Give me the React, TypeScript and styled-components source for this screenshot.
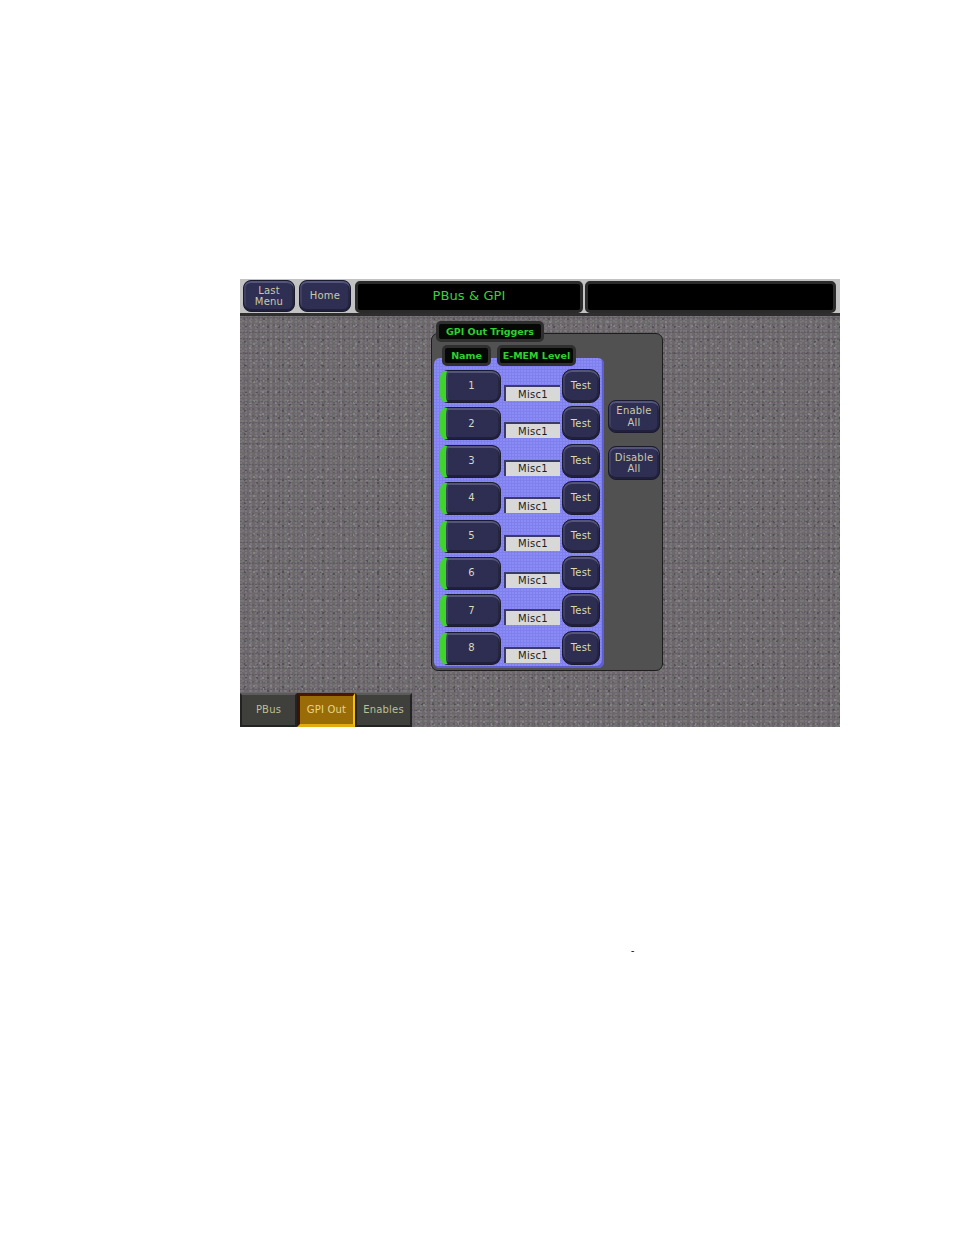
import React from "react";
import styled, { createGlobalStyle, css } from "styled-components";

const GlobalStyle = createGlobalStyle`
  html, body {
    margin: 0;
    padding: 0;
    background: #fff;
  }
`;

const speckle = css`
  background-color: #6c686b;
  background-image:
    radial-gradient(circle at 1px 1px, #8b8290 0.6px, transparent 0.8px),
    radial-gradient(circle at 3px 2px, #7f8a78 0.6px, transparent 0.8px),
    radial-gradient(circle at 1px 4px, #5c585e 0.65px, transparent 0.85px),
    radial-gradient(circle at 6px 9px, #484548 0.65px, transparent 0.85px),
    radial-gradient(circle at 10px 3px, #948a98 0.65px, transparent 0.85px),
    radial-gradient(circle at 14px 8px, #9aa396 0.6px, transparent 0.8px),
    radial-gradient(circle at 5px 17px, #4a474a 0.65px, transparent 0.85px),
    radial-gradient(circle at 20px 12px, #a39aa6 0.6px, transparent 0.8px);
  background-size:
    5px 3px, 7px 5px, 3px 7px, 11px 13px,
    13px 11px, 17px 19px, 19px 23px, 29px 31px;
`;

const Page = styled.div`
  width: 954px;
  height: 1235px;
  padding: 279px 0 0 240px;
  box-sizing: border-box;
  overflow: hidden;
  font-family: "DejaVu Sans", Verdana, sans-serif;
`;

const Window = styled.div`
  ${speckle}
  width: 600px;
  height: 448px;
  display: flex;
  flex-direction: column;
`;

const Header = styled.div`
  height: 37px;
  box-sizing: border-box;
  padding: 1px 3px 0 3px;
  display: flex;
  gap: 4px;
  background-color: #a4a4a4;
  background-image:
    radial-gradient(circle at 1px 1px, #c4c4c4 0.7px, transparent 0.85px);
  background-size: 2px 2px;
  border-bottom: 3px solid #2e2e2e;
`;

const BevelButton = styled.div<{ $w: number; $h: number }>`
  width: ${(p) => p.$w}px;
  height: ${(p) => p.$h}px;
  box-sizing: border-box;
  flex: none;
  display: flex;
  align-items: center;
  justify-content: center;
  text-align: center;
  font-size: 10px;
  line-height: 11.5px;
  letter-spacing: 0.2px;
  color: #c9c9aa;
  background-color: #383862;
  background-image:
    radial-gradient(circle at 1px 1px, #2e2e52 0.7px, transparent 0.85px);
  background-size: 2px 2px;
  border: 1px solid #1a1a30;
  border-radius: 8px;
  box-shadow:
    inset 0 2px 0 #55557a,
    inset 0 -2px 0 #20203a,
    inset 2px 0 0 #3f3f66,
    inset -2px 0 0 #25253f;
`;

const Display = styled.div<{ $w: number }>`
  width: ${(p) => p.$w}px;
  height: 32px;
  margin-top: 1px;
  box-sizing: border-box;
  flex: none;
  display: flex;
  align-items: center;
  justify-content: center;
  padding-bottom: 3px;
  font-size: 13px;
  letter-spacing: 0.1px;
  color: #35d335;
  background: #000;
  border: 3px solid #2b2b2b;
  border-radius: 5px;
`;

const BlankDisplay = styled(Display)`
  margin-left: -2px;
`;

const Content = styled.div`
  flex: 1;
  padding: 5px 0 0 191px;
`;

const GreenTag = styled.div<{ $w: number }>`
  position: relative;
  z-index: 2;
  width: ${(p) => p.$w}px;
  height: 21px;
  box-sizing: border-box;
  display: flex;
  align-items: center;
  justify-content: center;
  font-size: 9.5px;
  font-weight: bold;
  white-space: nowrap;
  color: #2fd02f;
  background: #050805;
  border: 3px solid #2f2f2f;
  border-radius: 5px;
`;

const TitleTag = styled(GreenTag)`
  margin-left: 5px;
`;

const Panel = styled.div`
  width: 232px;
  height: 338px;
  box-sizing: border-box;
  margin-top: -9px;
  padding-top: 11px;
  background-color: #474747;
  background-image:
    radial-gradient(circle at 1px 1px, #525252 0.7px, transparent 0.85px);
  background-size: 2px 2px;
  border: 1px solid #1d1d1d;
  border-radius: 7px;
`;

const ColumnHeads = styled.div`
  display: flex;
  gap: 6px;
  margin-left: 10px;
`;

const PanelBody = styled.div`
  display: flex;
  margin: -8px 0 0 2px;
`;

const BluePanel = styled.div`
  width: 170px;
  height: 310px;
  box-sizing: border-box;
  padding: 11px 4px 0 6px;
  background-color: #7f7fee;
  background-image:
    radial-gradient(circle at 1px 1px, #8c8cf6 0.7px, transparent 0.85px);
  background-size: 3px 3px;
  border-radius: 6px;
  box-shadow: inset -2px -2px 0 #5e5ed0;
`;

const Row = styled.div`
  height: 37.4px;
  display: flex;
  align-items: flex-start;
`;

const NumberButton = styled(BevelButton)`
  background-color: #2c2c48;
  border-left: 6px solid #3fd42c;
  border-radius: 8px 9px 9px 8px;
  margin-top: 1px;
  padding: 0 3px 1px 0;
  color: #d8d8c0;
`;

const TestButton = styled(BevelButton)`
  background-color: #30305a;
  border-radius: 10px;
  color: #dcdca8;
  margin-left: 2px;
`;

const Field = styled.div`
  width: 56px;
  height: 16px;
  box-sizing: border-box;
  margin: 16px 0 0 3px;
  flex: none;
  display: flex;
  align-items: center;
  justify-content: center;
  font-size: 10px;
  letter-spacing: 0.3px;
  color: #1c1c1c;
  background: #d8d8d8;
  border-top: 2px solid #3b3b66;
  border-left: 2px solid #3b3b66;
`;

const SideColumn = styled.div`
  display: flex;
  flex-direction: column;
  gap: 13px;
  padding: 42px 0 0 4px;
`;

const Tabs = styled.div`
  display: flex;
`;

const Tab = styled.div<{ $w: number; $active?: boolean }>`
  width: ${(p) => p.$w}px;
  height: 34px;
  box-sizing: border-box;
  flex: none;
  display: flex;
  align-items: center;
  justify-content: center;
  padding-bottom: 1px;
  font-size: 10px;
  letter-spacing: 0.2px;
  color: #bfbf90;
  background: #3f403c;
  border: 2px solid #232323;
  border-top: 2px solid #5b5b5b;
  ${(p) =>
    p.$active &&
    css`
      color: #e6d68a;
      background: #9a6c08;
      border-color: #4a1800 #f2c010 #e2ac10 #3a1400;
      border-width: 3px 2px 3px 3px;
    `}
`;

const Dash = styled.p`
  margin: 218px 0 0 391px;
  font-family: "Liberation Serif", serif;
  font-size: 10px;
  line-height: 12px;
  color: #000;
`;

const rows = [1, 2, 3, 4, 5, 6, 7, 8];

function App() {
  return (
    <Page>
      <GlobalStyle />
      <Window>
        <Header>
          <BevelButton $w={52} $h={32}>
            Last
            <br />
            Menu
          </BevelButton>
          <BevelButton $w={52} $h={32}>
            Home
          </BevelButton>
          <Display $w={228}>PBus &amp; GPI</Display>
          <BlankDisplay $w={251} />
        </Header>
        <Content>
          <TitleTag $w={108}>GPI Out Triggers</TitleTag>
          <Panel>
            <ColumnHeads>
              <GreenTag $w={49}>Name</GreenTag>
              <GreenTag $w={79}>E-MEM Level</GreenTag>
            </ColumnHeads>
            <PanelBody>
              <BluePanel>
                {rows.map((n) => (
                  <Row key={n}>
                    <NumberButton $w={61} $h={33}>
                      {n}
                    </NumberButton>
                    <Field>Misc1</Field>
                    <TestButton $w={38} $h={34}>
                      Test
                    </TestButton>
                  </Row>
                ))}
              </BluePanel>
              <SideColumn>
                <BevelButton $w={52} $h={33}>
                  Enable
                  <br />
                  All
                </BevelButton>
                <BevelButton $w={52} $h={34}>
                  Disable
                  <br />
                  All
                </BevelButton>
              </SideColumn>
            </PanelBody>
          </Panel>
        </Content>
        <Tabs>
          <Tab $w={57}>PBus</Tab>
          <Tab $w={58} $active>
            GPI Out
          </Tab>
          <Tab $w={57}>Enables</Tab>
        </Tabs>
      </Window>
      <Dash>-</Dash>
    </Page>
  );
}

export default App;
